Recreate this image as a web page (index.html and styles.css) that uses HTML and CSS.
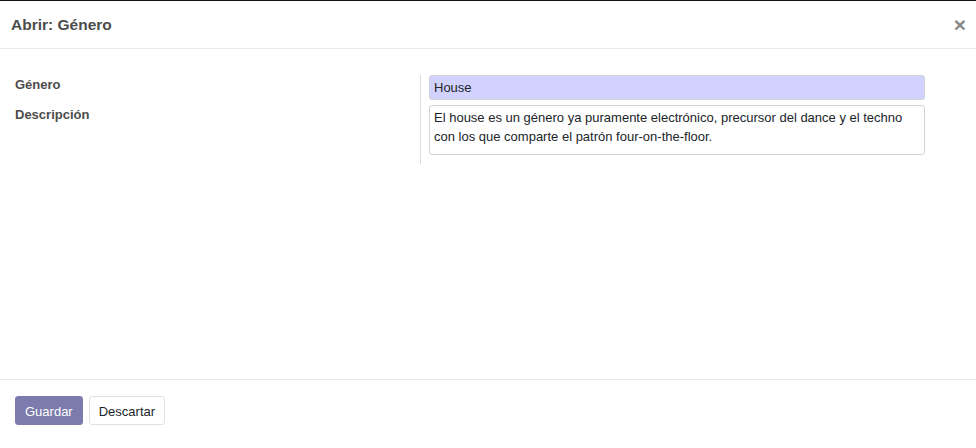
FILE: index.html
```html
<!DOCTYPE html>
<html lang="es">
<head>
<meta charset="utf-8">
<link rel="stylesheet" href="styles.css">
</head>
<body>
<div class="modal">
  <header class="modal-header">
    <h4 class="modal-title">Abrir: Género</h4>
    <button class="close" type="button">×</button>
  </header>
  <main class="modal-body">
    <div class="labels">
      <div class="label label-first">Género</div>
      <div class="label">Descripción</div>
    </div>
    <div class="fields">
      <div class="input">House</div>
      <div class="textarea">El house es un género ya puramente electrónico, precursor del dance y el techno con los que comparte el patrón four-on-the-floor.</div>
    </div>
  </main>
  <footer class="modal-footer">
    <button class="btn btn-primary" type="button">Guardar</button>
    <button class="btn btn-secondary" type="button">Descartar</button>
  </footer>
</div>
</body>
</html>
```
FILE: styles.css
```css
* { box-sizing: border-box; }
html, body { margin: 0; padding: 0; background: #fff; }
body {
  font-family: "Liberation Sans", Arial, sans-serif;
  font-size: 13px;
  color: #212529;
}
.modal {
  width: 976px;
  height: 448px;
  display: flex;
  flex-direction: column;
  border-top: 1px solid #111;
}
.modal-header {
  height: 48px;
  display: flex;
  align-items: center;
  justify-content: space-between;
  padding: 0 11px;
  border-bottom: 1px solid #e6e9ed;
}
.modal-title {
  margin: 0;
  font-size: 15.5px;
  font-weight: bold;
  color: #4c4c4c;
}
.close {
  border: 0;
  background: none;
  padding: 0;
  margin-right: -1px;
  font-family: "Liberation Sans", Arial, sans-serif;
  font-size: 21px;
  font-weight: bold;
  color: #888;
  line-height: 1;
  cursor: pointer;
}
.modal-body {
  flex: 1;
  display: flex;
  padding: 26px 15px 0 15px;
}
.labels {
  width: 405px;
  display: flex;
  flex-direction: column;
}
.label {
  font-weight: bold;
  color: #4c4c4c;
  line-height: 20px;
  height: 30px;
}
.fields {
  width: 505px;
  border-left: 1px solid #dcdcdc;
  padding: 0 0 9px 8px;
  align-self: flex-start;
}
.input {
  height: 25px;
  background: #d2d2ff;
  border: 1px solid #cfd4da;
  border-radius: 3px;
  padding: 0 4px;
  line-height: 23px;
  color: #212529;
}
.textarea {
  margin-top: 5px;
  height: 50px;
  border: 1px solid #cfd4da;
  border-radius: 3px;
  padding: 2px 4px;
  line-height: 19px;
  color: #212529;
}
.modal-footer {
  height: 69px;
  border-top: 1px solid #e6e9ed;
  padding: 16px 15px 0 15px;
  display: flex;
  align-items: flex-start;
  gap: 6px;
}
.btn {
  height: 29px;
  padding: 2px 9px 0 9px;
  font-family: "Liberation Sans", Arial, sans-serif;
  font-size: 13px;
  border-radius: 3px;
  cursor: pointer;
}
.btn-primary {
  background: #7c7bad;
  border: 1px solid #7c7bad;
  color: #fff;
}
.btn-secondary {
  background: #fff;
  border: 1px solid #dee2e6;
  color: #212529;
}
```
